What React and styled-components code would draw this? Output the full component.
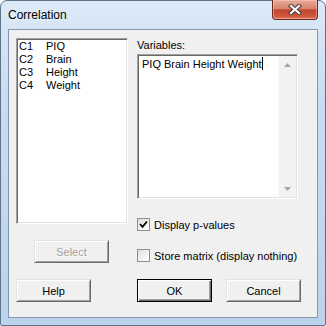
import React from "react";
import styled, { createGlobalStyle } from "styled-components";

const Global = createGlobalStyle`
  html, body {
    margin: 0;
    padding: 0;
    background: #fff;
  }
  body {
    font-family: "Liberation Sans", Arial, sans-serif;
    font-size: 11px;
    color: #000;
  }
`;

const Window = styled.div`
  box-sizing: border-box;
  width: 326px;
  height: 326px;
  display: flex;
  flex-direction: column;
  border: 1px solid #5f7389;
  border-radius: 7px 7px 2px 2px;
  padding: 0 7px 7px 7px;
  background: linear-gradient(to bottom, #dce9f7 0%, #c9dcf1 30%, #bcd3ec 100%);
`;

const TitleBar = styled.div`
  height: 28px;
  flex: none;
  display: flex;
  align-items: center;
`;

const Title = styled.div`
  font-size: 12px;
  color: #000;
  text-shadow: 0 0 6px rgba(255, 255, 255, 0.9);
`;

const CloseButton = styled.div`
  box-sizing: border-box;
  margin-left: auto;
  align-self: flex-start;
  margin-top: -1px;
  width: 46px;
  height: 20px;
  display: flex;
  align-items: center;
  justify-content: center;
  border: 1px solid #6a2a1f;
  border-top: none;
  border-radius: 0 0 4px 4px;
  background: linear-gradient(to bottom, #e9a99a 0%, #d8846f 45%, #c3462f 52%, #d0573d 85%, #e07a5c 100%);
  box-shadow: inset 0 0 0 1px rgba(255, 210, 200, 0.45);
`;

const Client = styled.div`
  box-sizing: border-box;
  flex: 1;
  background: #f0f0f0;
  border: 1px solid #8497ad;
  padding: 8px 7px 0 7px;
  display: flex;
  flex-direction: column;
`;

const TopSection = styled.div`
  display: flex;
`;

const LeftPane = styled.div`
  width: 112px;
  display: flex;
  flex-direction: column;
`;

const RightPane = styled.div`
  margin-left: 9px;
  display: flex;
  flex-direction: column;
`;

const Sunken = styled.div`
  box-sizing: border-box;
  background: #fff;
  border: 1px solid;
  border-color: #a0a0a0 #fff #fff #a0a0a0;
  box-shadow: inset 1px 1px 0 #696969, inset -1px -1px 0 #e3e3e3;
`;

const ListBox = styled(Sunken)`
  height: 186px;
  padding: 1px 2px;
`;

const ListRow = styled.div`
  display: flex;
  line-height: 13px;
  height: 13px;
`;

const Code = styled.span`
  width: 27px;
`;

const Label = styled.div`
  height: 16px;
  line-height: 14px;
`;

const TextArea = styled(Sunken)`
  width: 161px;
  height: 145px;
  display: flex;
`;

const TextContent = styled.div`
  flex: 1;
  padding: 2px 0 0 4px;
  line-height: 13px;
`;

const Caret = styled.span`
  display: inline-block;
  width: 1px;
  height: 13px;
  background: #000;
  vertical-align: -2px;
`;

const ScrollBar = styled.div`
  width: 17px;
  margin: 1px 1px 1px 0;
  display: flex;
  flex-direction: column;
  background: #f2f2f2;
  border-left: 1px solid #fbfbfb;
`;

const Arrow = styled.div`
  height: 17px;
  display: flex;
  align-items: center;
  justify-content: center;
`;

const Track = styled.div`
  flex: 1;
`;

const CheckRow = styled.label`
  display: flex;
  align-items: center;
  height: 13px;
  margin-top: ${(p) => p.$top}px;
`;

const CheckBox = styled.span`
  box-sizing: border-box;
  width: 13px;
  height: 13px;
  border: 1px solid #8e8f8f;
  background: linear-gradient(135deg, #dcdcdc 0%, #f4f4f4 60%, #fff 100%);
  display: flex;
  align-items: center;
  justify-content: center;
  margin-right: 4px;
`;

const Button = styled.button`
  box-sizing: border-box;
  width: 75px;
  height: 23px;
  padding: 0;
  font-family: "Liberation Sans", Arial, sans-serif;
  font-size: 11px;
  color: ${(p) => (p.disabled ? "#a0a0a0" : "#000")};
  text-shadow: ${(p) => (p.disabled ? "1px 1px 0 #fff" : "none")};
  background: #f0f0f0;
  border: 1px solid;
  border-color: ${(p) => (p.$default ? "#000" : "#e3e3e3 #696969 #696969 #e3e3e3")};
  box-shadow: ${(p) =>
    p.$default
      ? "inset 1px 1px 0 #fff, inset -1px -1px 0 #696969, inset -2px -2px 0 #a0a0a0"
      : "inset 1px 1px 0 #fff, inset -1px -1px 0 #a0a0a0"};
`;

const SelectButton = styled(Button)`
  margin-top: 16px;
  margin-left: 18px;
`;

const ButtonRow = styled.div`
  display: flex;
  margin-top: 16px;
`;

const LeftSlot = styled.div`
  width: 112px;
  margin-right: 9px;
`;

const RightSlot = styled.div`
  display: flex;
  gap: 14px;
`;

const columns = [
  ["C1", "PIQ"],
  ["C2", "Brain"],
  ["C3", "Height"],
  ["C4", "Weight"],
];

const CloseGlyph = () => (
  <svg width="14" height="11" viewBox="0 0 14 11">
    <path d="M3 2 L11 9 M11 2 L3 9" stroke="#4a3a36" strokeWidth="4.2" strokeLinecap="square" />
    <path d="M3 2 L11 9 M11 2 L3 9" stroke="#fff" strokeWidth="2.2" strokeLinecap="square" />
  </svg>
);

const Tri = ({ up }) => (
  <svg width="7" height="4" viewBox="0 0 7 4">
    <path d={up ? "M0 4 L3.5 0 L7 4 Z" : "M0 0 L3.5 4 L7 0 Z"} fill="#a6a6a6" />
  </svg>
);

const Check = () => (
  <svg width="9" height="9" viewBox="0 0 9 9">
    <path d="M1 4 L3.5 6.8 L8 1.5" stroke="#000" strokeWidth="1.8" fill="none" />
  </svg>
);

export default function App() {
  return (
    <>
      <Global />
      <Window>
        <TitleBar>
          <Title>Correlation</Title>
          <CloseButton>
            <CloseGlyph />
          </CloseButton>
        </TitleBar>
        <Client>
          <TopSection>
            <LeftPane>
              <ListBox>
                {columns.map(([c, name]) => (
                  <ListRow key={c}>
                    <Code>{c}</Code>
                    <span>{name}</span>
                  </ListRow>
                ))}
              </ListBox>
              <SelectButton disabled>Select</SelectButton>
            </LeftPane>
            <RightPane>
              <Label>Variables:</Label>
              <TextArea>
                <TextContent>
                  PIQ Brain Height Weight<Caret />
                </TextContent>
                <ScrollBar>
                  <Arrow>
                    <Tri up />
                  </Arrow>
                  <Track />
                  <Arrow>
                    <Tri />
                  </Arrow>
                </ScrollBar>
              </TextArea>
              <CheckRow $top={19}>
                <CheckBox>
                  <Check />
                </CheckBox>
                Display p-values
              </CheckRow>
              <CheckRow $top={18}>
                <CheckBox />
                Store matrix (display nothing)
              </CheckRow>
            </RightPane>
          </TopSection>
          <ButtonRow>
            <LeftSlot>
              <Button>Help</Button>
            </LeftSlot>
            <RightSlot>
              <Button $default>OK</Button>
              <Button>Cancel</Button>
            </RightSlot>
          </ButtonRow>
        </Client>
      </Window>
    </>
  );
}
